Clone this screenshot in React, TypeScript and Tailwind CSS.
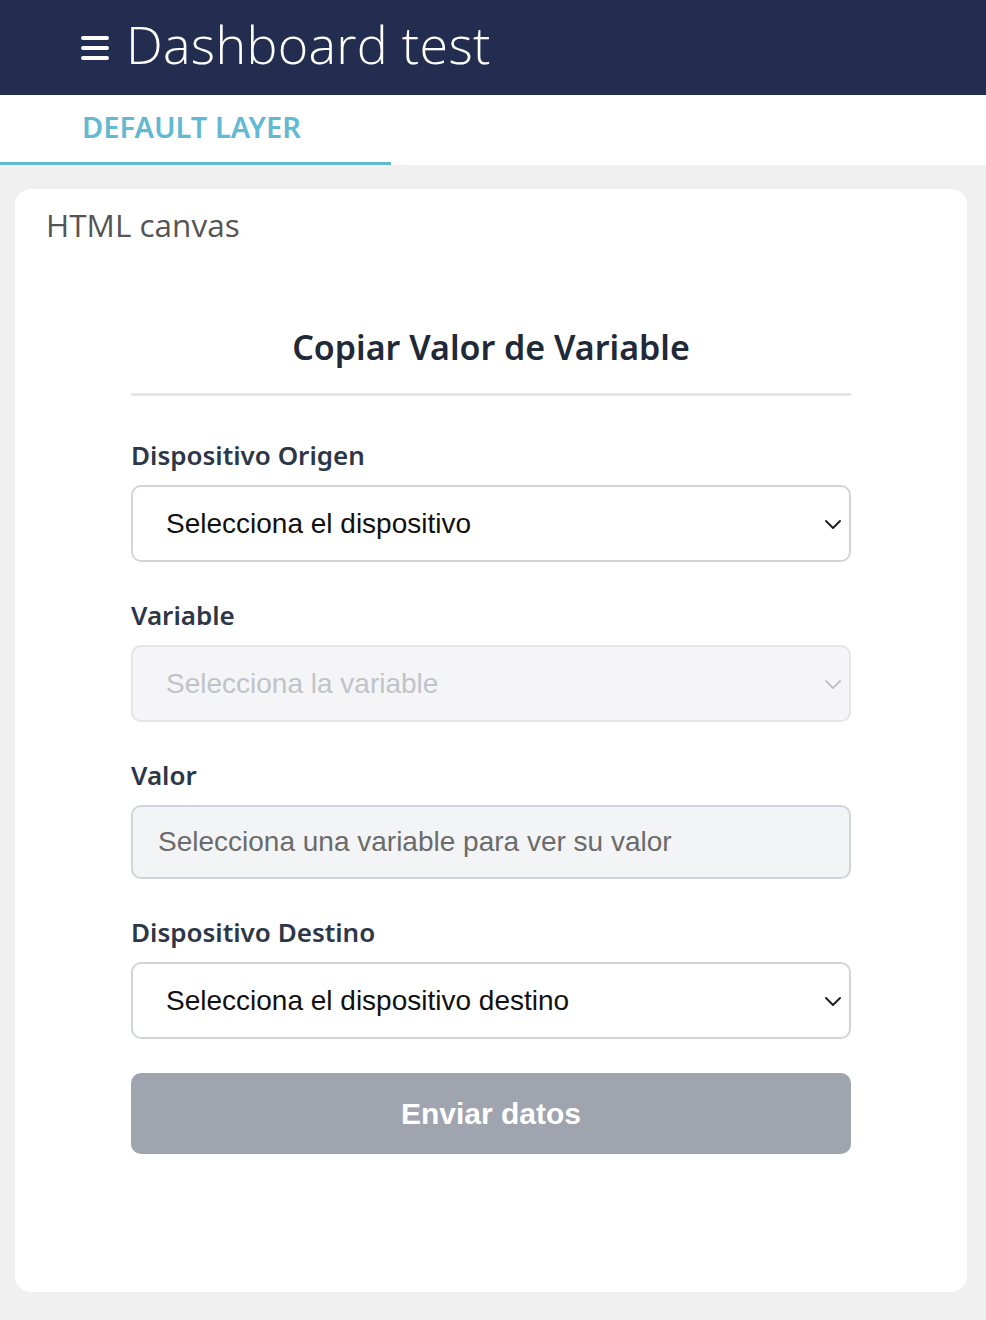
import React from "react";

function Chevron({ color }: { color: string }) {
  return (
    <svg width="18" height="12" viewBox="0 0 18 12" fill="none">
      <path d="M2 3l7 7 7-7" stroke={color} strokeWidth="2" strokeLinecap="round" strokeLinejoin="round" />
    </svg>
  );
}

function SelectBox({ text, disabled }: { text: string; disabled?: boolean }) {
  return (
    <div
      className={
        "flex h-[77px] items-center justify-between rounded-[10px] border-2 pl-[33px] pr-[7px] " +
        (disabled ? "border-[#e3e5e8] bg-[#f5f5f7]" : "border-[#d1d5db] bg-white")
      }
    >
      <span
        className={"text-[28px] " + (disabled ? "text-[#c0c3c8]" : "text-[#111111]")}
        style={{ fontFamily: '"Liberation Sans", Arial, sans-serif' }}
      >
        {text}
      </span>
      <Chevron color={disabled ? "#c0c3c8" : "#222222"} />
    </div>
  );
}

function Label({ children }: { children: React.ReactNode }) {
  return (
    <div
      className="mb-[15px] text-[26px] font-semibold leading-[30px] text-[#2d3748]"
      style={{ fontFamily: '"Noto Sans", sans-serif' }}
    >
      {children}
    </div>
  );
}

export default function App() {
  return (
    <div className="min-h-[1320px] bg-[#f0f0f0]">
      <header className="flex h-[95px] items-center bg-[#222d50] pl-[81px]">
        <div className="flex w-[28px] flex-col gap-[6px]">
          <div className="h-[4px] rounded-full bg-white" />
          <div className="h-[4px] rounded-full bg-white" />
          <div className="h-[4px] rounded-full bg-white" />
        </div>
        <h1
          className="ml-[17px] mt-[-8px] text-[52px] font-light leading-none tracking-[0.3px] text-white"
          style={{ fontFamily: '"Open Sans", sans-serif' }}
        >
          Dashboard test
        </h1>
      </header>
      <nav className="flex h-[70px] bg-white">
        <div className="flex h-full w-[391px] items-center border-b-[3px] border-[#61b8cf] pb-[3px] pl-[82px]">
          <span
            className="text-[29px] font-semibold text-[#63b9d1]"
            style={{ fontFamily: '"Noto Sans", sans-serif' }}
          >
            DEFAULT LAYER
          </span>
        </div>
      </nav>
      <div className="pl-[15px] pr-[19px] pt-[24px] pb-[28px]">
        <div className="h-[1103px] rounded-[16px] bg-white pl-[31px] pt-[16px]">
          <div
            className="text-[31.5px] leading-[40px] text-[#555555]"
            style={{ fontFamily: '"Open Sans", sans-serif' }}
          >
            HTML canvas
          </div>
          <div className="ml-[85px] mt-[80px] w-[720px]">
            <h2
              className="text-center text-[34px] font-semibold leading-[44px] text-[#1f2937]"
              style={{ fontFamily: '"Noto Sans", sans-serif' }}
            >
              Copiar Valor de Variable
            </h2>
            <div className="mt-[24px] h-[3px] bg-[#e5e7eb]" />
            <div className="mt-[44px]">
              <Label>Dispositivo Origen</Label>
              <SelectBox text="Selecciona el dispositivo" />
            </div>
            <div className="mt-[38px]">
              <Label>Variable</Label>
              <SelectBox text="Selecciona la variable" disabled />
            </div>
            <div className="mt-[38px]">
              <Label>Valor</Label>
              <div className="flex h-[74px] items-center rounded-[10px] border-2 border-[#d1d5db] bg-[#f3f4f6] pl-[25px]">
                <span
                  className="text-[28px] text-[#6b6b6b]"
                  style={{ fontFamily: '"Liberation Sans", Arial, sans-serif' }}
                >
                  Selecciona una variable para ver su valor
                </span>
              </div>
            </div>
            <div className="mt-[38px]">
              <Label>Dispositivo Destino</Label>
              <SelectBox text="Selecciona el dispositivo destino" />
            </div>
            <button
              className="mt-[34px] flex h-[81px] w-full items-center justify-center rounded-[10px] bg-[#a0a4ae] text-[30px] font-bold text-white"
              style={{ fontFamily: '"Liberation Sans", Arial, sans-serif' }}
            >
              Enviar datos
            </button>
          </div>
        </div>
      </div>
    </div>
  );
}
